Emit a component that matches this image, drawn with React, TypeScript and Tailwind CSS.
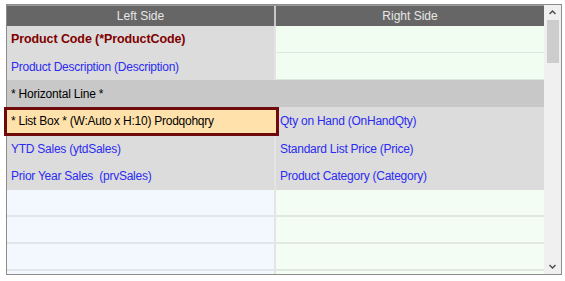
import React from "react";

const font = { fontFamily: '"Liberation Sans", Arial, sans-serif' };

function Row({
  left,
  right,
  leftBg = "bg-[#dcdcdc]",
  rightBg = "bg-[#f2fdf2]",
  h = "h-[27px]",
  line = true,
}: {
  left?: React.ReactNode;
  right?: React.ReactNode;
  leftBg?: string;
  rightBg?: string;
  h?: string;
  line?: boolean;
}) {
  return (
    <div className={`flex ${h} shrink-0`}>
      <div
        className={`w-[269px] shrink-0 ${leftBg} flex items-center pl-[4px] border-r-2 border-[#e4e4e4] relative`}
      >
        {left}
      </div>
      <div
        className={`flex-1 ${rightBg} flex items-center pl-[4px] ${line ? "border-b border-[#dde6dd]" : ""}`}
      >
        {right}
      </div>
    </div>
  );
}

function EmptyRow({ h = "h-[27px]", line = true }: { h?: string; line?: boolean }) {
  return (
    <div className={`flex ${h} shrink-0`}>
      <div
        className={`w-[269px] shrink-0 bg-[#f3f8fe] border-r-2 border-r-[#e4e4e4] ${line ? "border-b-2 border-b-[#e2e6ea]" : ""}`}
      />
      <div className={`flex-1 bg-[#f3fdf3] ${line ? "border-b-2 border-[#e0e8e0]" : ""}`} />
    </div>
  );
}

const blue = "text-[#2b2bf2] tracking-[-0.25px]";

export default function App() {
  return (
    <div className="w-[565px] h-[281px] bg-white relative" style={font}>
      <div className="absolute left-[6px] top-[4px] w-[556px] h-[271px] border border-[#8c8c8c] flex text-[12px]">
        <div className="flex-1 flex flex-col">
          {/* header */}
          <div className="flex h-[21px] shrink-0 bg-[#666666] text-[#e6e6e6] border-t border-[#9a9a9a]">
            <div className="w-[269px] shrink-0 flex items-center justify-center border-r-2 border-[#c8c8c8]">
              Left Side
            </div>
            <div className="flex-1 flex items-center justify-center">Right Side</div>
          </div>
          <Row
            left={
              <span className="font-bold text-[#800000] text-[12.5px] tracking-[-0.1px]">
                Product Code (*ProductCode)
              </span>
            }
          />
          <Row left={<span className={blue}>Product Description (Description)</span>} />
          <div className="flex h-[27px] shrink-0 bg-[#c8c8c8] items-center pl-[4px] text-black tracking-[-0.2px]">
            * Horizontal Line *
          </div>
          <Row
            h="h-[28px]"
            line={false}
            rightBg="bg-[#dcdcdc]"
            left={
              <>
                <div className="absolute left-[-3px] right-[-5px] top-0 bottom-[-1px] border-[3px] border-[#700a0a] bg-[#ffe2ab] z-10" />
                <span className="relative z-20 text-black tracking-[-0.25px]">
                  * List Box * (W:Auto x H:10) Prodqohqry
                </span>
              </>
            }
            right={<span className={blue}>Qty on Hand (OnHandQty)</span>}
          />
          <Row
            h="h-[27px]"
            line={false}
            rightBg="bg-[#dcdcdc]"
            left={<span className={blue}>YTD Sales (ytdSales)</span>}
            right={<span className={blue}>Standard List Price (Price)</span>}
          />
          <Row
            h="h-[28px]"
            line={false}
            rightBg="bg-[#dcdcdc]"
            left={<span className={blue}>Prior Year Sales&nbsp; (prvSales)</span>}
            right={<span className={blue}>Product Category (Category)</span>}
          />
          <EmptyRow />
          <EmptyRow />
          <EmptyRow />
          <EmptyRow h="h-[3px]" line={false} />
        </div>
        {/* scrollbar */}
        <div className="w-[17px] shrink-0 bg-[#f0f0f0] flex flex-col items-center">
          <div className="h-[15px] w-full flex items-center justify-center">
            <svg width="7" height="5" viewBox="0 0 7 5">
              <path d="M0.5 4 L3.5 1 L6.5 4" stroke="#505050" strokeWidth="1.5" fill="none" />
            </svg>
          </div>
          <div className="w-[12px] h-[43px] bg-[#cdcdcd]" />
          <div className="flex-1" />
          <div className="h-[15px] w-full flex items-center justify-center">
            <svg width="7" height="5" viewBox="0 0 7 5">
              <path d="M0.5 1 L3.5 4 L6.5 1" stroke="#505050" strokeWidth="1.5" fill="none" />
            </svg>
          </div>
        </div>
      </div>
    </div>
  );
}
